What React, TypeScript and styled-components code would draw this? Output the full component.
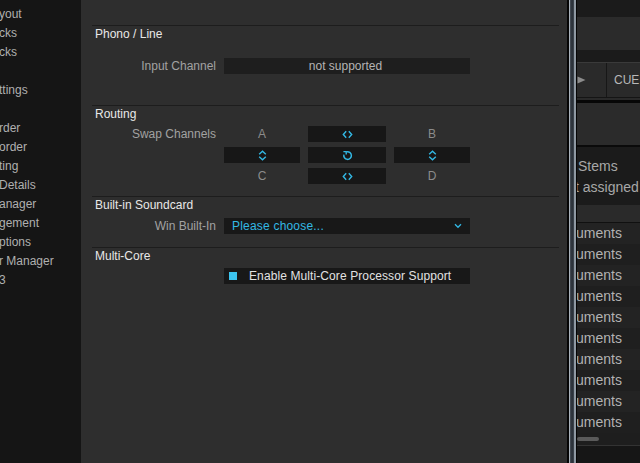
import React from 'react'
import styled, { createGlobalStyle } from 'styled-components'

const CYAN = '#33b8e4'

const GlobalStyle = createGlobalStyle`
  html, body {
    margin: 0;
    padding: 0;
    background: #141414;
  }
  body {
    font-family: 'Liberation Sans', Arial, sans-serif;
    font-size: 12px;
  }
`

const sidebarItems = [
  'yout',
  'cks',
  'cks',
  '',
  'ttings',
  '',
  'rder',
  'order',
  'ting',
  'Details',
  'anager',
  'gement',
  'ptions',
  'r Manager',
  '3',
]

const HChevrons = () => (
  <svg width="11" height="9" viewBox="0 0 11 9" fill="none">
    <path d="M4.2 1.2 L1.3 4.5 L4.2 7.8" stroke={CYAN} strokeWidth="1.4" />
    <path d="M6.8 1.2 L9.7 4.5 L6.8 7.8" stroke={CYAN} strokeWidth="1.4" />
  </svg>
)

const VChevrons = () => (
  <svg width="9" height="11" viewBox="0 0 9 11" fill="none">
    <path d="M1.2 4.2 L4.5 1.2 L7.8 4.2" stroke={CYAN} strokeWidth="1.4" />
    <path d="M1.2 6.8 L4.5 9.8 L7.8 6.8" stroke={CYAN} strokeWidth="1.4" />
  </svg>
)

const RotateIcon = () => (
  <svg width="11" height="11" viewBox="0 0 11 11" fill="none">
    <path d="M4.6 1.9 A3.8 3.8 0 1 1 1.9 4.6" stroke={CYAN} strokeWidth="1.5" />
    <path d="M1.4 1.6 L4.2 1.6 L4.2 4.4" stroke={CYAN} strokeWidth="1.4" />
  </svg>
)

const ChevronDown = () => (
  <svg width="8" height="6" viewBox="0 0 8 6" fill="none">
    <path d="M1 1.3 L4 4.3 L7 1.3" stroke={CYAN} strokeWidth="1.3" />
  </svg>
)

const PlayIcon = () => (
  <svg width="9" height="8" viewBox="0 0 9 8">
    <path d="M0.5 0.5 L8.5 4 L0.5 7.5 Z" fill="#8c8c8c" />
  </svg>
)

const App: React.FC = () => {
  const rows = Array.from({ length: 10 }, (_, i) => i)

  return (
    <>
      <GlobalStyle />
      <Screen>
        <Sidebar>
          {sidebarItems.map((item, i) => (
            <SidebarItem key={i}>{item}</SidebarItem>
          ))}
        </Sidebar>

        <Panel>
          <Section>
            <SectionTitle>Phono / Line</SectionTitle>
            <SectionBody top={17} bottom={31}>
              <Row>
                <Label>Input Channel</Label>
                <Field tone="light" align="center">
                  not supported
                </Field>
              </Row>
            </SectionBody>
          </Section>

          <Section>
            <SectionTitle>Routing</SectionTitle>
            <SectionBody top={5} bottom={12}>
              <RoutingGrid>
                <Label>Swap Channels</Label>
                <ChannelLetter>A</ChannelLetter>
                <SwapButton>
                  <HChevrons />
                </SwapButton>
                <ChannelLetter>B</ChannelLetter>

                <span />
                <SwapButton>
                  <VChevrons />
                </SwapButton>
                <SwapButton>
                  <RotateIcon />
                </SwapButton>
                <SwapButton>
                  <VChevrons />
                </SwapButton>

                <span />
                <ChannelLetter>C</ChannelLetter>
                <SwapButton>
                  <HChevrons />
                </SwapButton>
                <ChannelLetter>D</ChannelLetter>
              </RoutingGrid>
            </SectionBody>
          </Section>

          <Section>
            <SectionTitle>Built-in Soundcard</SectionTitle>
            <SectionBody top={6} bottom={13}>
              <Row>
                <Label>Win Built-In</Label>
                <Field tone="dark" align="left">
                  <SelectText>Please choose...</SelectText>
                  <ChevronDown />
                </Field>
              </Row>
            </SectionBody>
          </Section>

          <Section>
            <SectionTitle>Multi-Core</SectionTitle>
            <SectionBody top={5} bottom={0}>
              <Row>
                <span />
                <Field tone="dark" align="left">
                  <CheckBox />
                  <CheckLabel>Enable Multi-Core Processor Support</CheckLabel>
                </Field>
              </Row>
            </SectionBody>
          </Section>
        </Panel>

        <Edge />

        <RightPane>
          <Strip h={17} bg="#1b1b1b" />
          <Strip h={33} bg="#2b2b2b" />
          <Strip h={12} bg="#1b1b1b" />
          <Strip h={1} bg="#3a3a3a" />
          <TransportRow>
            <PlayCell>
              <PlayIcon />
            </PlayCell>
            <CueCell>CUE</CueCell>
          </TransportRow>
          <Strip h={1} bg="#151515" />
          <Strip h={2} bg="#2a2a2a" />
          <Strip h={3} bg="#070707" />
          <Strip h={42} bg="#2b2b2b" />
          <Strip h={2} bg="#0a0a0a" />
          <InfoBlock>
            <InfoLine>Stems</InfoLine>
            <InfoLine shift={-2}>t assigned</InfoLine>
          </InfoBlock>
          <Strip h={17} bg="#2a2a2a" />
          <Strip h={1} bg="#101010" />
          {rows.map((i) => (
            <ListRow key={i} odd={i % 2 === 1}>
              uments
            </ListRow>
          ))}
          <ScrollArea>
            <ScrollThumb />
          </ScrollArea>
          <Strip h={1} bg="#333333" />
          <Strip h={17} bg="#161616" />
        </RightPane>
      </Screen>
    </>
  )
}

const Screen = styled.div`
  display: flex;
  width: 640px;
  height: 463px;
  overflow: hidden;
  background: #141414;
`

const Sidebar = styled.div`
  width: 81px;
  flex-shrink: 0;
  background: #151515;
  padding-top: 5px;
  box-sizing: border-box;
  overflow: hidden;
`

const SidebarItem = styled.div`
  height: 19px;
  line-height: 19px;
  color: #b0b0b0;
  font-size: 12px;
  white-space: nowrap;
  margin-left: -1px;
`

const Panel = styled.div`
  width: 486px;
  flex-shrink: 0;
  background: #2e2e2e;
  padding: 25px 8px 0 11px;
  box-sizing: border-box;
`

const Section = styled.div`
  border-top: 1px solid #1d1d1d;
`

const SectionTitle = styled.div`
  height: 15px;
  line-height: 17px;
  padding-left: 3px;
  color: #e8e8e8;
  font-size: 12px;
`

const SectionBody = styled.div<{ top: number; bottom: number }>`
  padding-top: ${(p) => p.top}px;
  padding-bottom: ${(p) => p.bottom}px;
`

const Row = styled.div`
  display: grid;
  grid-template-columns: 132px 246px;
  align-items: center;
`

const Label = styled.div`
  text-align: right;
  padding-right: 8px;
  color: #a2a2a2;
  font-size: 12px;
  white-space: nowrap;
`

const Field = styled.div<{ tone: 'light' | 'dark'; align: 'left' | 'center' }>`
  height: 16px;
  display: flex;
  align-items: center;
  justify-content: ${(p) => (p.align === 'center' ? 'center' : 'flex-start')};
  background: ${(p) => (p.tone === 'light' ? '#1e1e1e' : '#181818')};
  color: #b4b4b4;
  font-size: 12px;
  padding: 0 8px 0 5px;
  box-sizing: border-box;
  white-space: nowrap;
`

const SelectText = styled.span`
  flex: 1;
  padding-left: 3px;
  color: ${CYAN};
  letter-spacing: 0.2px;
`

const CheckBox = styled.span`
  width: 8px;
  height: 8px;
  background: #3cc4ef;
  flex-shrink: 0;
`

const CheckLabel = styled.span`
  margin-left: 12px;
  color: #e2e2e2;
  letter-spacing: 0.1px;
`

const RoutingGrid = styled.div`
  display: grid;
  grid-template-columns: 124px 76px 78px 76px;
  grid-auto-rows: 16px;
  column-gap: 8px;
  row-gap: 5px;
  align-items: center;

  ${Label} {
    padding-right: 0;
  }
`

const ChannelLetter = styled.div`
  text-align: center;
  color: #8c8c8c;
  font-size: 12px;
`

const SwapButton = styled.div`
  height: 16px;
  background: #171717;
  display: flex;
  align-items: center;
  justify-content: center;
`

const Edge = styled.div`
  width: 10px;
  flex-shrink: 0;
  background: linear-gradient(
    to right,
    #050505 0px,
    #050505 2px,
    #a9b2bb 2px,
    #a9b2bb 3px,
    #4a525c 3px,
    #262c33 5px,
    #3a424b 6.5px,
    #8e98a2 7.5px,
    #8e98a2 9px,
    #050505 9px
  );
`

const RightPane = styled.div`
  flex: 1;
  display: flex;
  flex-direction: column;
  overflow: hidden;
  background: #1b1b1b;
`

const Strip = styled.div<{ h: number; bg: string }>`
  height: ${(p) => p.h}px;
  flex-shrink: 0;
  background: ${(p) => p.bg};
`

const TransportRow = styled.div`
  height: 34px;
  flex-shrink: 0;
  display: flex;
  background: #2a2a2a;
`

const PlayCell = styled.div`
  width: 30px;
  display: flex;
  align-items: center;
  padding-left: 0;
  border-right: 1px solid #171717;
  box-sizing: border-box;
`

const CueCell = styled.div`
  flex: 1;
  display: flex;
  align-items: center;
  padding-left: 7px;
  color: #b8b8b8;
  font-size: 12px;
  white-space: nowrap;
`

const InfoBlock = styled.div`
  height: 58px;
  flex-shrink: 0;
  background: #1b1b1b;
  padding-top: 9px;
  box-sizing: border-box;
`

const InfoLine = styled.div<{ shift?: number }>`
  height: 21px;
  line-height: 21px;
  margin-left: ${(p) => p.shift ?? 1}px;
  color: #a8a8a8;
  font-size: 14px;
  white-space: nowrap;
`

const ListRow = styled.div<{ odd: boolean }>`
  height: 21px;
  line-height: 21px;
  flex-shrink: 0;
  background: ${(p) => (p.odd ? '#1f1f1f' : '#232323')};
  color: #b2b2b2;
  font-size: 14px;
  margin-left: -1px;
  white-space: nowrap;
`

const ScrollArea = styled.div`
  height: 12px;
  flex-shrink: 0;
  background: #1e1e1e;
  display: flex;
  align-items: center;
`

const ScrollThumb = styled.div`
  width: 22px;
  height: 4px;
  border-radius: 2px;
  background: #5a5a5a;
`

export default App
